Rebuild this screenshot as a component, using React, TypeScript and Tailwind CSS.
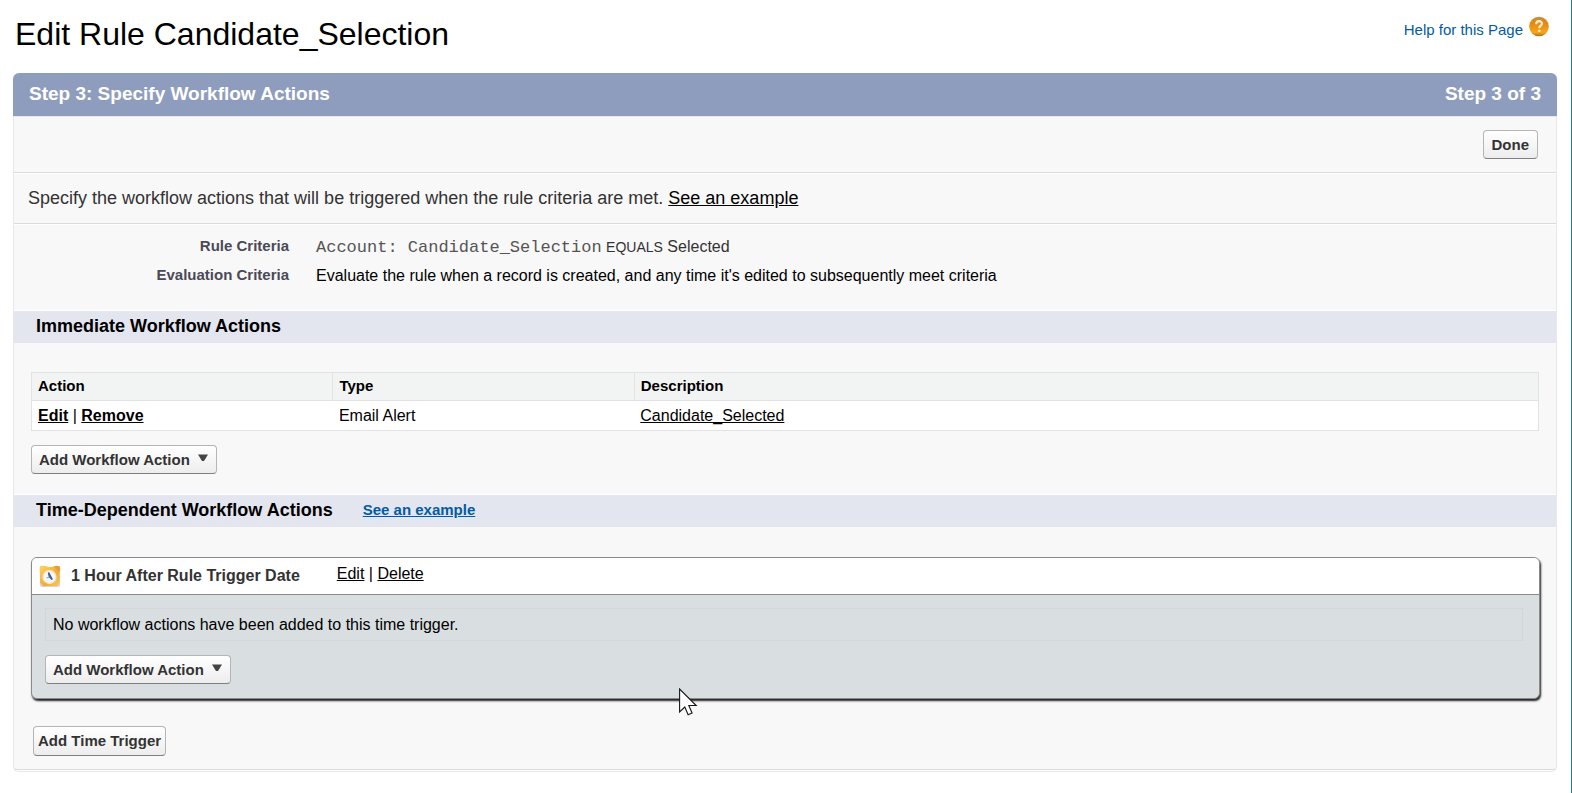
import type { ReactNode } from "react";

const buttonClass =
  "flex items-center rounded border border-[#b5b5b5] border-b-[#7f7f7f] bg-linear-to-b from-white to-[#ededed] text-[15px] leading-5 font-bold whitespace-nowrap text-[#333]";

function MenuButton() {
  return (
    <button type="button" className={`${buttonClass} h-[29px] gap-2 pr-2 pl-[7px]`}>
      Add Workflow Action
      <svg width="10" height="8" viewBox="0 0 10 8" className="mb-1" aria-hidden="true">
        <path d="M0 0.5h10L6 7H4z" fill="#444" />
      </svg>
    </button>
  );
}

function HelpIcon() {
  return (
    <svg width="20" height="21" viewBox="0 0 20 21" aria-hidden="true">
      <defs>
        <linearGradient id="help" x1="0" y1="0" x2="0" y2="1">
          <stop offset="0" stopColor="#c98a3a" />
          <stop offset="0.35" stopColor="#e58a10" />
          <stop offset="0.8" stopColor="#f7a51c" />
          <stop offset="1" stopColor="#a86f22" />
        </linearGradient>
      </defs>
      <circle cx="10" cy="10.5" r="9.8" fill="url(#help)" />
      <path
        d="M7.200 8.200c0-4 5.800-3.800 5.800-.6 0 2-2.700 2.200-2.700 4.400"
        fill="none"
        stroke="#fdeccb"
        strokeWidth="2.200"
      />
      <circle cx="10.3" cy="14.8" r="1.3" fill="#fdeccb" />
    </svg>
  );
}

function ClockIcon() {
  return (
    <svg width="22" height="22" viewBox="0 0 22 22" aria-hidden="true">
      <defs>
        <linearGradient id="clock" x1="0" y1="0" x2="1" y2="1">
          <stop offset="0" stopColor="#fbd65f" />
          <stop offset="0.6" stopColor="#f2a93c" />
          <stop offset="1" stopColor="#f6c968" />
        </linearGradient>
      </defs>
      <rect x="1" y="2" width="20" height="20" rx="2" fill="#d9d5cc" />
      <path d="M1 1q5-1 8 1h4Q17 0 21 1.500q.500 4-.500 7l.500 9-2.500 3.500H4l-3-3.500V9Q0 5 1 1z" fill="url(#clock)" />
      <path d="M15 2q4-2 5.500 0t-.500 5z" fill="#ee9a2c" />
      <circle cx="10.500" cy="12" r="7.200" fill="#f7e3ae" />
      <circle cx="10.500" cy="12" r="6" fill="#f5f7fa" />
      <path d="M9.500 7.500l1 4.500 2.800 2.500z" fill="#3f5c94" stroke="#3f5c94" strokeWidth="1.500" />
      <path d="M10.500 12l-3 1" fill="none" stroke="#93a7c9" strokeWidth="1.200" />
    </svg>
  );
}

function Pointer() {
  return (
    <svg
      width="20"
      height="29"
      viewBox="0 0 20 29"
      className="pointer-events-none absolute top-[688px] left-[679px]"
      aria-hidden="true"
    >
      <path
        d="M.6 1v23l5.200-5 3.300 7.700 4-1.700-3.300-7.500h7.400z"
        fill="#fff"
        stroke="#16161c"
        strokeWidth="1.100"
      />
    </svg>
  );
}

function SectionBar({ children }: { children: ReactNode }) {
  return (
    <div className="flex h-[33px] items-center border-t border-white bg-[#e3e5ef] pr-4 pb-[2px] pl-[22px]">
      {children}
    </div>
  );
}

export default function App() {
  return (
    <div className="relative min-h-screen border-r border-[#1d7f97] bg-white pr-[14px] pb-5 pl-[13px] font-['Liberation_Sans',Arial,sans-serif] text-black">
      <header className="flex h-[73px] items-start justify-between pt-[14px] pr-2 pl-[2px]">
        <h1 className="text-[32px] leading-10">Edit Rule Candidate_Selection</h1>
        <a href="#help" className="flex items-start gap-[6px] pt-[2px] text-[15px] text-[#015ba7]">
          <span className="pt-1 leading-5">Help for this Page</span>
          <HelpIcon />
        </a>
      </header>

      <main className="rounded-b-md border-b border-[#e8e8e8] pb-px">
        <div className="flex h-[43px] items-center justify-between rounded-t-md bg-[#8e9dbe] px-4 text-[19px] font-bold text-white">
          <h2>Step 3: Specify Workflow Actions</h2>
          <span>Step 3 of 3</span>
        </div>

        <div className="rounded-b border border-[#e8e8e8] border-b-[#dbdbdb] bg-[#f8f8f8]">
          <div className="flex h-14 items-start justify-end border-b border-[#dbdbdb] pt-[13px] pr-[18px]">
            <button type="button" className={`${buttonClass} h-[29px] px-2`}>
              Done
            </button>
          </div>

          <p className="h-[51px] border-t border-b border-t-white border-b-[#dbdbdb] pt-3 pl-[14px] text-[18px] leading-6 text-[#333]">
            Specify the workflow actions that will be triggered when the rule criteria are met.{" "}
            <a href="#example" className="text-black underline">
              See an example
            </a>
          </p>

          <dl className="grid grid-cols-[275px_1fr] gap-x-[27px] border-t border-white pt-2 pb-5 leading-7">
            <dt className="text-right text-[15px] leading-[26px] font-bold text-[#4a4a56]">Rule Criteria</dt>
            <dd className="text-[16px] text-[#333]">
              <span className="font-['Liberation_Mono','Courier_New',monospace] text-[17px] text-[#555]">
                Account: Candidate_Selection
              </span>{" "}
              <span className="text-[14px]">EQUALS</span> Selected
            </dd>
            <dt className="text-right text-[15px] leading-[26px] font-bold text-[#4a4a56]">Evaluation Criteria</dt>
            <dd className="text-[16px]">
              Evaluate the rule when a record is created, and any time it's edited to subsequently meet criteria
            </dd>
          </dl>

          <SectionBar>
            <h3 className="text-[18px] font-bold">Immediate Workflow Actions</h3>
          </SectionBar>

          <div className="pt-[29px] pr-[17px] pb-5 pl-[17px]">
            <table className="w-full table-fixed border-collapse border border-[#e0e3e5] text-left">
              <colgroup>
                <col className="w-1/5" />
                <col className="w-1/5" />
                <col className="w-3/5" />
              </colgroup>
              <thead className="bg-[#f2f3f3] text-[15px]">
                <tr className="h-7">
                  <th className="border border-[#e0e3e5] px-[6px] font-bold">Action</th>
                  <th className="border border-[#e0e3e5] px-[6px] font-bold">Type</th>
                  <th className="border border-[#e0e3e5] px-[6px] font-bold">Description</th>
                </tr>
              </thead>
              <tbody className="bg-white text-[16px]">
                <tr className="h-[30px]">
                  <td className="px-[6px]">
                    <a href="#edit-action" className="font-bold underline">
                      Edit
                    </a>{" "}
                    |{" "}
                    <a href="#remove-action" className="font-bold underline">
                      Remove
                    </a>
                  </td>
                  <td className="px-[6px]">Email Alert</td>
                  <td className="px-[6px]">
                    <a href="#alert" className="underline">
                      Candidate_Selected
                    </a>
                  </td>
                </tr>
              </tbody>
            </table>
            <div className="flex pt-[14px]">
              <MenuButton />
            </div>
          </div>

          <SectionBar>
            <h3 className="text-[18px] font-bold">Time-Dependent Workflow Actions</h3>
            <a href="#time-example" className="ml-[30px] text-[15px] font-bold text-[#015ba7] underline">
              See an example
            </a>
          </SectionBar>

          <div className="pt-[30px] pr-4 pb-[13px] pl-[17px]">
            <section className="overflow-hidden rounded-md border border-[#8a8a8a] bg-[#d9dfe1] shadow-[1px_2px_2px_#222]">
              <div className="flex h-[37px] items-center border-b border-[#8a8a8a] bg-white pl-[7px]">
                <ClockIcon />
                <h4 className="pl-[10px] text-[16px] font-bold text-[#333]">1 Hour After Rule Trigger Date</h4>
                <div className="pb-1 pl-[37px] text-[16px]">
                  <a href="#edit-trigger" className="underline">
                    Edit
                  </a>{" "}
                  |{" "}
                  <a href="#delete-trigger" className="underline">
                    Delete
                  </a>
                </div>
              </div>
              <div className="pt-[13px] pr-4 pb-[14px] pl-[13px]">
                <p className="flex h-[33px] items-center border border-[#d2d8da] pl-[7px] text-[16px]">
                  No workflow actions have been added to this time trigger.
                </p>
                <div className="flex pt-[14px]">
                  <MenuButton />
                </div>
              </div>
            </section>
            <div className="flex pt-[27px] pl-[2px]">
              <button type="button" className={`${buttonClass} h-[30px] px-[4px]`}>
                Add Time Trigger
              </button>
            </div>
          </div>
        </div>
      </main>
      <Pointer />
    </div>
  );
}
